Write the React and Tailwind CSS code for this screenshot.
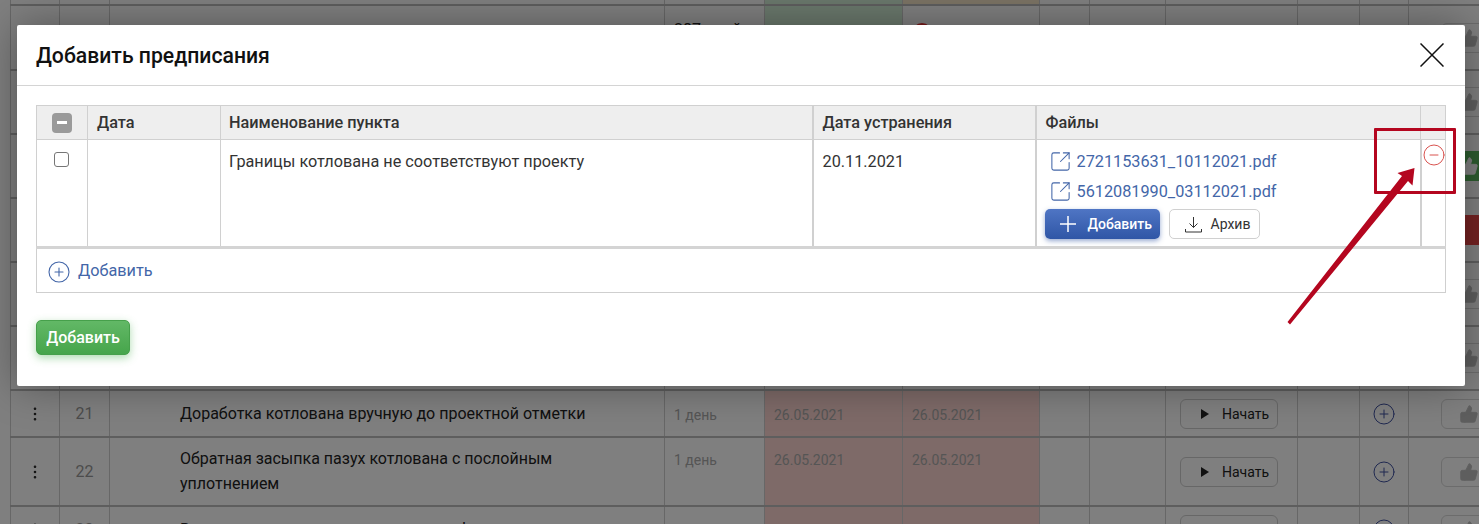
import { CircleMinus, CirclePlus, EllipsisVertical, SquareArrowOutUpRight, ThumbsUp } from "lucide-react";

const rows = [
  { id: "top", height: "h-[6px]", tones: ["bg-[#d5f0d8]", "bg-[#f7e6c8]"] },
  { id: "r1", height: "h-[65px]", days: "287 дней", tones: ["bg-[#d5f0d8]", "bg-white"], started: true, thumb: "plain" },
  { id: "r2", height: "h-[64px]", tones: ["bg-white", "bg-white"], thumb: "plain" },
  { id: "r3", height: "h-[64px]", tones: ["bg-white", "bg-white"], thumb: "green" },
  { id: "r4", height: "h-[64px]", tones: ["bg-white", "bg-white"], thumb: "red" },
  { id: "r5", height: "h-[64px]", tones: ["bg-white", "bg-white"], thumb: "plain" },
  { id: "r6", height: "h-[64px]", tones: ["bg-white", "bg-white"], thumb: "plain" },
  {
    id: "21", height: "h-[47px]", num: "21", text: "Доработка котлована вручную до проектной отметки", days: "1 день",
    date: "26.05.2021", tones: ["bg-[#fcd5d0]", "bg-[#fcd5d0]"], action: true, thumb: "plain", center: true,
  },
  {
    id: "22", height: "h-[69px]", num: "22", text: "Обратная засыпка пазух котлована с послойным уплотнением", days: "1 день",
    date: "26.05.2021", tones: ["bg-[#fcd5d0]", "bg-[#fcd5d0]"], action: true, thumb: "plain",
  },
  {
    id: "23", height: "h-[47px]", num: "23", text: "Вертикальная планировка зоны под фундамент", days: "1 день",
    date: "26.05.2021", tones: ["bg-[#fcd5d0]", "bg-[#fcd5d0]"], action: true, thumb: "plain", center: true,
  },
];

function ThumbButton({ kind }) {
  if (kind === "green") {
    return (
      <div className="flex h-[30px] w-[56px] items-center justify-center rounded-md bg-[#5bb85f] text-white">
        <ThumbsUp size={20} fill="currentColor" strokeWidth={1} />
      </div>
    );
  }
  if (kind === "red") {
    return <div className="h-[30px] w-[56px] rounded-md bg-[#e84444]" />;
  }
  return (
    <div className="flex h-[30px] w-[56px] items-center justify-center rounded-md border border-[#d8d8d8] text-[#bdbdbd]">
      <ThumbsUp size={20} fill="currentColor" strokeWidth={1} />
    </div>
  );
}

function BackgroundRow({ row }) {
  const short = row.id === "top";
  const cell = "shrink-0 border-r border-[#cfcfcf]";
  return (
    <div className={`flex ${row.height} overflow-hidden border-b-2 border-[#bdbdbd] text-[16px] text-[#222]`}>
      <div className={`${cell} flex w-[50px] items-center justify-center border-l border-l-[#cfcfcf]`}>
        {row.num && <EllipsisVertical size={18} strokeWidth={1.5} className="text-[#222]" />}
      </div>
      <div className={`${cell} flex w-[50px] items-center justify-center text-[#999]`}>{row.num}</div>
      <div className={`${cell} w-[555px] pl-[70px] leading-[25px] ${row.center ? "pt-[10px]" : "pt-[8px]"}`}>
        {row.text && <span className="block w-[440px]">{row.text}</span>}
      </div>
      <div className={`${cell} w-[100px] pl-[9px] text-[#aaa] ${row.center ? "pt-[14px]" : "pt-[12px]"} text-[14px]`}>
        {row.started ? <span className="text-[16px] text-[#222]">{row.days}</span> : row.days}
      </div>
      <div className={`${cell} w-[138px] pl-[9px] ${row.tones[0]} ${row.center ? "pt-[14px]" : "pt-[12px]"} text-[14px] text-[#aaa]`}>
        {row.started ? (
          <div className="flex items-center gap-[14px] pt-[5px] text-[16px] text-[#222]">
            <span className="h-[20px] w-[20px] rounded-full border border-[#2f8a3a]" />
            <span>00.00.2020</span>
          </div>
        ) : (
          row.date
        )}
      </div>
      <div className={`${cell} w-[137px] pl-[9px] ${row.tones[1]} ${row.center ? "pt-[14px]" : "pt-[12px]"} text-[14px] text-[#aaa]`}>
        {row.started ? <span className="mt-[5px] block h-[20px] w-[20px] rounded-full bg-[#e33]" /> : row.date}
      </div>
      <div className={`${cell} w-[50px]`} />
      <div className={`${cell} w-[76px]`} />
      <div className={`${cell} flex w-[132px] items-center pl-[14px]`}>
        {row.action && (
          <div className="flex h-[30px] w-[98px] items-center gap-[13px] rounded-md border border-[#cfcfcf] pl-[20px] pt-[1px] text-[14px]">
            <span className="h-0 w-0 border-y-[5px] border-l-[8px] border-y-transparent border-l-[#222]" />
            Начать
          </div>
        )}
      </div>
      <div className={`${cell} w-[62px]`} />
      <div className={`${cell} flex w-[49px] items-center justify-center text-[#3f51a0]`}>
        {!short && <CirclePlus size={24} strokeWidth={1} />}
      </div>
      <div className="flex w-[140px] shrink-0 items-center pl-[32px]">{!short && <ThumbButton kind={row.thumb} />}</div>
    </div>
  );
}

function FileLink({ name }) {
  return (
    <a className="flex h-[30px] items-center gap-[5px] pl-[4px] text-[#4366a8]">
      <SquareArrowOutUpRight size={23} strokeWidth={1.1} className="-mt-[2px]" />
      {name}
    </a>
  );
}

export default function App() {
  return (
    <div className="relative h-[524px] w-[1479px] overflow-hidden bg-[#e4e4e4] font-['Roboto',sans-serif]">
      <div className="w-[1600px] bg-white pl-[10px]">
        {rows.map((row) => (
          <BackgroundRow key={row.id} row={row} />
        ))}
      </div>

      <div className="absolute inset-0 bg-black/50 pl-[17px] pt-[25px]">
        <div className="flex h-[361px] w-[1448px] flex-col rounded-[2px] bg-white shadow-[0_0_40px_rgba(0,0,0,0.35)]">
          <div className="flex h-[61px] shrink-0 items-center justify-between border-b border-[#d4d4d4] pl-[19px] pr-[21px]">
            <h2 className="pt-[2px] text-[21.2px] font-medium text-[#111]">Добавить предписания</h2>
            <svg width="24" height="24" viewBox="0 0 24 24" stroke="#111" strokeWidth="1.5">
              <path d="M0.5 0.5 L23.5 23.5 M23.5 0.5 L0.5 23.5" />
            </svg>
          </div>

          <div className="flex-1 pl-[19px] pt-[19px]">
            <table className="w-[1409px] table-fixed border-collapse border border-[#cfcfcf] text-[16.25px] text-[#333]">
              <colgroup>
                <col className="w-[51px]" />
                <col className="w-[133px]" />
                <col className="w-[592px]" />
                <col className="w-[223px]" />
                <col className="w-[385px]" />
                <col className="w-[25px]" />
              </colgroup>
              <thead>
                <tr className="h-[34px] bg-[#eeeeee] text-left font-medium">
                  <th className="border border-[#d0d0d0] p-0">
                    <div className="ml-[15px] flex h-[20px] w-[20px] items-center justify-center rounded-[4px] bg-[#9a9a9a]">
                      <span className="h-[3px] w-[10px] bg-white" />
                    </div>
                  </th>
                  <th className="border border-[#d0d0d0] pl-[9px] pt-[2px] font-medium">Дата</th>
                  <th className="border border-[#d0d0d0] pl-[8px] pt-[2px] font-medium">Наименование пункта</th>
                  <th className="border-y border-r-2 border-l-2 border-[#d0d0d0] pl-[9px] pt-[2px] font-medium">Дата устранения</th>
                  <th className="border-y border-l-2 border-r border-[#d0d0d0] pl-[9px] pt-[2px] font-medium">Файлы</th>
                  <th className="border border-[#d0d0d0]" />
                </tr>
              </thead>
              <tbody>
                <tr className="h-[108px] border-b-[3px] border-[#d4d4d4] align-top">
                  <td className="border-x border-[#d0d0d0] pl-[17px] pt-[12px]">
                    <div className="h-[15px] w-[15px] rounded-[3px] border border-[#767676]" />
                  </td>
                  <td className="border-x border-[#d0d0d0]" />
                  <td className="border-x border-[#d0d0d0] pl-[8px] pt-[10px] leading-[24px]">
                    Границы котлована не соответствуют проекту
                  </td>
                  <td className="border-x-2 border-[#d0d0d0] pl-[9px] pt-[10px] leading-[24px]">20.11.2021</td>
                  <td className="border-x-2 border-[#d0d0d0] pl-[8px] pt-[7px]">
                    <FileLink name="2721153631_10112021.pdf" />
                    <FileLink name="5612081990_03112021.pdf" />
                    <div className="mt-[2px] flex gap-[9px]">
                      <button className="flex h-[30px] w-[115px] items-center gap-[12px] rounded-[5px] bg-gradient-to-b from-[#4f75c4] to-[#2f56a6] pl-[15px] text-[14px] font-medium text-white shadow-[0_2px_5px_rgba(47,86,166,0.5)]">
                        <svg width="16" height="16" viewBox="0 0 16 16" stroke="white" strokeWidth="1.5">
                          <path d="M8 0 V16 M0 8 H16" />
                        </svg>
                        Добавить
                      </button>
                      <button className="flex h-[30px] w-[91px] items-center gap-[9px] rounded-[5px] border border-[#d0d0d0] pl-[15px] text-[14px] text-[#333]">
                        <svg width="17" height="17" viewBox="0 0 17 17" fill="none" stroke="#333" strokeWidth="1">
                          <path d="M8.5 1 V11.5 M4.5 7.5 L8.5 11.5 L12.5 7.5 M0.5 13 V16 H16.5 V13" />
                        </svg>
                        Архив
                      </button>
                    </div>
                  </td>
                  <td className="border-x border-[#d0d0d0] pt-[3px] text-[#d9534f]">
                    <CircleMinus size={24} strokeWidth={1} />
                  </td>
                </tr>
                <tr className="h-[45px]">
                  <td colSpan={6} className="pl-[10px]">
                    <a className="flex items-center gap-[7px] text-[#4366a8]">
                      <CirclePlus size={24} strokeWidth={1.1} className="mt-[2px]" />
                      <span className="mt-[1px]">Добавить</span>
                    </a>
                  </td>
                </tr>
              </tbody>
            </table>

            <button className="mt-[27px] flex h-[35px] w-[94px] items-center justify-center rounded-[5px] border border-[#46a04b] bg-gradient-to-b from-[#62b866] to-[#46a54b] text-[16px] font-medium text-white shadow-[0_3px_8px_rgba(76,175,80,0.45)]">
              Добавить
            </button>
          </div>
        </div>
      </div>

      {/* red annotation on top of the screenshot */}
      <div className="absolute left-[1374px] top-[128px] h-[66px] w-[82px] rounded-[1px] border-[3px] border-[#b4061f]" />
      <svg className="absolute inset-0" width="1479" height="524" viewBox="0 0 1479 524">
        <polygon fill="#b4061f" points="1414.5,168 1412.5,185.5 1408,181 1290,324.5 1287.5,322 1402,176 1397.5,173" />
      </svg>
    </div>
  );
}
